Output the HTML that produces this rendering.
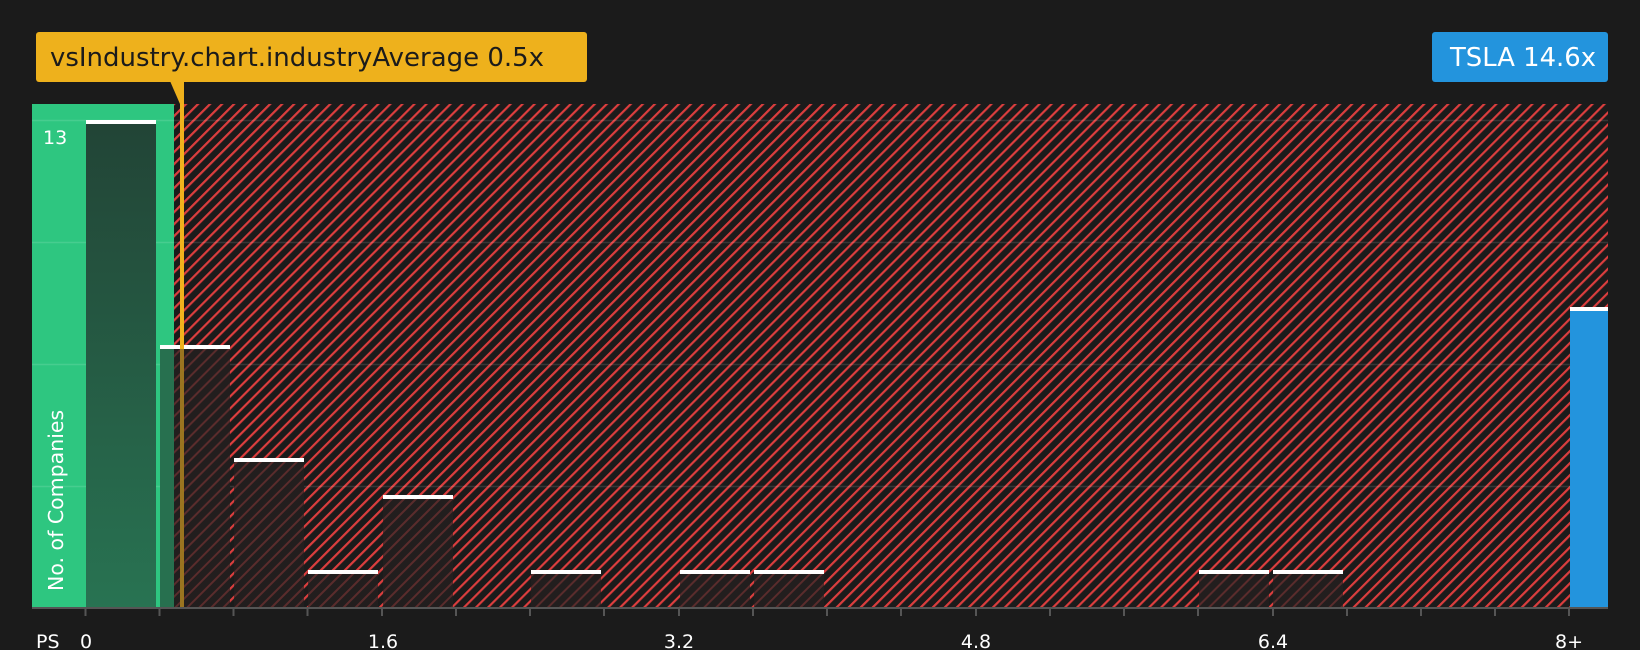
<!DOCTYPE html>
<html><head><meta charset="utf-8"><style>
html,body{margin:0;padding:0;background:#1b1b1b;width:1640px;height:650px;overflow:hidden;font-family:"DejaVu Sans","Liberation Sans",sans-serif}
</style></head><body>
<svg width="1640" height="650" xmlns="http://www.w3.org/2000/svg" style="position:absolute;left:0;top:0">
<defs>
<pattern id="h" patternUnits="userSpaceOnUse" width="8.5" height="8.5" patternTransform="rotate(45)">
<rect width="8.5" height="8.5" fill="#1b1b1b"/><rect x="0" y="0" width="2.2" height="8.5" fill="#dc3e3e"/>
</pattern>
<pattern id="hd" patternUnits="userSpaceOnUse" width="8.5" height="8.5" patternTransform="rotate(45)">
<rect width="8.5" height="8.5" fill="#221e1e"/><rect x="0" y="0" width="2" height="8.5" fill="#5a2c2c"/>
</pattern>
<linearGradient id="g" x1="0" y1="0" x2="0" y2="1"><stop offset="0" stop-color="#224436"/><stop offset="1" stop-color="#287352"/></linearGradient>
</defs>
<rect x="174" y="104" width="1434" height="504" fill="url(#h)"/>
<rect x="32" y="104" width="142" height="504" fill="#2ec680"/>
<g stroke="#ffffff" stroke-opacity="0.12" stroke-width="1.5">
<line x1="32" y1="120.5" x2="1608" y2="120.5"/><line x1="32" y1="242.5" x2="1608" y2="242.5"/>
<line x1="32" y1="364.5" x2="1608" y2="364.5"/><line x1="32" y1="486.5" x2="1608" y2="486.5"/>
</g>
<rect x="86" y="122" width="70" height="486" fill="url(#g)"/>
<rect x="160" y="347" width="14" height="261" fill="#27704f"/>
<rect x="174" y="347" width="56" height="261" fill="url(#hd)"/>
<rect x="234" y="460" width="70" height="148" fill="url(#hd)"/>
<rect x="308" y="572" width="70" height="36" fill="url(#hd)"/>
<rect x="383" y="497" width="70" height="111" fill="url(#hd)"/>
<rect x="531" y="572" width="70" height="36" fill="url(#hd)"/>
<rect x="680" y="572" width="70" height="36" fill="url(#hd)"/>
<rect x="754" y="572" width="70" height="36" fill="url(#hd)"/>
<rect x="1199" y="572" width="70" height="36" fill="url(#hd)"/>
<rect x="1273" y="572" width="70" height="36" fill="url(#hd)"/>
<rect x="1570" y="309" width="38" height="299" fill="#2394dd"/>
<g fill="#ffffff">
<rect x="86" y="120" width="70" height="4"/><rect x="160" y="345" width="70" height="4"/>
<rect x="234" y="458" width="70" height="4"/><rect x="308" y="570" width="70" height="4"/>
<rect x="383" y="495" width="70" height="4"/><rect x="531" y="570" width="70" height="4"/>
<rect x="680" y="570" width="70" height="4"/><rect x="754" y="570" width="70" height="4"/>
<rect x="1199" y="570" width="70" height="4"/><rect x="1273" y="570" width="70" height="4"/>
<rect x="1570" y="307" width="38" height="4"/>
</g>
<rect x="180" y="88" width="4" height="520" fill="#f0b21d"/>
<rect x="180" y="349" width="4" height="259" fill="#9a7420"/>
<rect x="32" y="607" width="1576" height="2" fill="#555"/>
<g fill="#555">
<rect x="84.5" y="608" width="2" height="8"/><rect x="158.5" y="608" width="2" height="8"/><rect x="232.5" y="608" width="2" height="8"/>
<rect x="306.5" y="608" width="2" height="8"/><rect x="381" y="608" width="2" height="8"/><rect x="455" y="608" width="2" height="8"/>
<rect x="529" y="608" width="2" height="8"/><rect x="603" y="608" width="2" height="8"/><rect x="678" y="608" width="2" height="8"/>
<rect x="752" y="608" width="2" height="8"/><rect x="826" y="608" width="2" height="8"/><rect x="900" y="608" width="2" height="8"/>
<rect x="975" y="608" width="2" height="8"/><rect x="1049" y="608" width="2" height="8"/><rect x="1123" y="608" width="2" height="8"/>
<rect x="1197" y="608" width="2" height="8"/><rect x="1272" y="608" width="2" height="8"/><rect x="1346" y="608" width="2" height="8"/>
<rect x="1420" y="608" width="2" height="8"/><rect x="1494" y="608" width="2" height="8"/><rect x="1568" y="608" width="2" height="8"/>
</g>
<g fill="#ffffff" font-size="19" font-family="DejaVu Sans, Liberation Sans, sans-serif">
<text x="36" y="648">PS</text>
<text x="86" y="648" text-anchor="middle">0</text>
<text x="383" y="648" text-anchor="middle">1.6</text>
<text x="679" y="648" text-anchor="middle">3.2</text>
<text x="976" y="648" text-anchor="middle">4.8</text>
<text x="1273" y="648" text-anchor="middle">6.4</text>
<text x="1569" y="648" text-anchor="middle">8+</text>
<text x="43" y="144">13</text>
<text transform="translate(63,591) rotate(-90)" font-size="20.5">No. of Companies</text>
</g>
<rect x="36" y="32" width="551" height="50" rx="3" fill="#eeb11c"/>
<path d="M170 81 L180 104 L184 104 L184 81 Z" fill="#eeb11c"/>
<text x="50" y="66" font-size="26" fill="#1b1b1b" font-family="DejaVu Sans, Liberation Sans, sans-serif" textLength="494" lengthAdjust="spacingAndGlyphs">vsIndustry.chart.industryAverage 0.5x</text>
<rect x="1432" y="32" width="176" height="50" rx="3" fill="#2394dd"/>
<text x="1450" y="66" font-size="26" fill="#ffffff" font-family="DejaVu Sans, Liberation Sans, sans-serif" textLength="146" lengthAdjust="spacingAndGlyphs">TSLA 14.6x</text>
</svg>
</body></html>
